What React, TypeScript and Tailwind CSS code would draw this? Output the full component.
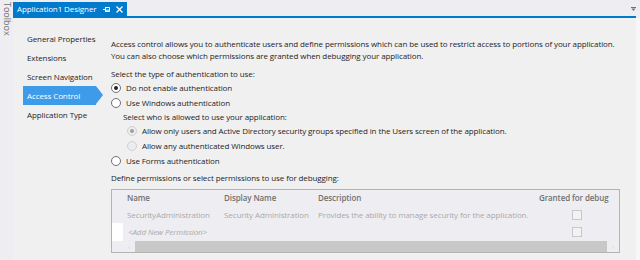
import React from 'react';

const navItems = ['General Properties', 'Extensions', 'Screen Navigation', 'Access Control', 'Application Type'];

function Radio({ checked, disabled }: { checked?: boolean; disabled?: boolean }) {
    return (
        <span
            className={`mr-[5px] flex h-[10px] w-[10px] shrink-0 items-center justify-center rounded-full border ${disabled ? 'border-[#d0d0d0] bg-[#ececec]' : 'border-[#707070] bg-white'}`}
        >
            {checked && <span className={`h-[4px] w-[4px] rounded-full ${disabled ? 'bg-[#a0a0a0]' : 'bg-[#222]'}`} />}
        </span>
    );
}

function Check() {
    return <span className="block h-[10px] w-[10px] border border-[#c8c8c8] bg-[#f2f2f2]" />;
}

export default function App() {
    return (
        <div
            className="flex h-[260px] w-[640px] overflow-hidden whitespace-nowrap bg-[#eeeef2] text-[8px] leading-[12px] tracking-[-0.1px] text-[#1e1e1e]"
            style={{ fontFamily: '"Open Sans", sans-serif' }}
        >
            {/* Toolbox strip */}
            <div className="w-[13px] shrink-0 pt-[2px]">
                <div className="ml-[1px] text-[9px] tracking-normal text-[#717171] [writing-mode:vertical-rl]">Toolbox</div>
            </div>

            <div className="flex min-w-0 flex-1 flex-col">
                {/* Tab row */}
                <div className="flex h-[16px] items-end justify-between pr-[4px]">
                    <div className="flex h-[14px] w-[114px] items-center bg-[#007acc] pl-[4px] text-white">
                        <span>Application1 Designer</span>
                        <svg className="ml-[7px]" width="8" height="7" viewBox="0 0 8 7">
                            <path d="M0 3.5H2.5M2.5 1V6M2.5 1.5H6.5V5.5H2.5M2.5 4.2H6.5" stroke="white" strokeWidth="1" fill="none" />
                        </svg>
                        <svg className="ml-[5px]" width="7" height="7" viewBox="0 0 7 7">
                            <path d="M0.5 0.5L6.5 6.5M6.5 0.5L0.5 6.5" stroke="white" strokeWidth="1.3" />
                        </svg>
                    </div>
                    <svg className="mb-[5px]" width="5" height="4" viewBox="0 0 5 4">
                        <path d="M0 0H5V1H0ZM0.5 1.5H4.5L2.5 4Z" fill="#717171" />
                    </svg>
                </div>
                <div className="mr-[4px] h-[2px] bg-[#007acc]" />

                {/* Designer body */}
                <div className="flex flex-1 border-r-[4px] border-[#f7f7f9] bg-[#f0f0f0]">
                    <div className="flex w-[98px] shrink-0 flex-col pt-[11px]">
                        {navItems.map((item) =>
                            item === 'Access Control' ? (
                                <div key={item} className="relative ml-[10px] flex h-[19px] w-[73px] items-center bg-[#3d9be9] pl-[4px] text-white">
                                    {item}
                                    <span className="absolute right-[-7px] top-0 h-0 w-0 border-y-[9.5px] border-l-[7px] border-y-transparent border-l-[#3d9be9]" />
                                </div>
                            ) : (
                                <div key={item} className="flex h-[19px] items-center pl-[14px] text-[#1e1e1e]">
                                    {item}
                                </div>
                            )
                        )}
                    </div>

                    <div className="flex min-w-0 flex-1 flex-col pt-[20px] pr-[16px]">
                        <p>
                            Access control allows you to authenticate users and define permissions which can be used to restrict access to portions of your application.
                            <br />
                            You can also choose which permissions are granted when debugging your application.
                        </p>
                        <p className="mt-[6px]">Select the type of authentication to use:</p>
                        <label className="flex h-[15px] items-center">
                            <Radio checked />
                            Do not enable authentication
                        </label>
                        <label className="flex h-[15px] items-center">
                            <Radio />
                            Use Windows authentication
                        </label>
                        <div className="pl-[12px]">
                            <p className="mt-[1px]">Select who is allowed to use your application:</p>
                            <label className="flex h-[15px] items-center pl-[4px]">
                                <Radio checked disabled />
                                Allow only users and Active Directory security groups specified in the Users screen of the application.
                            </label>
                            <label className="flex h-[15px] items-center pl-[4px]">
                                <Radio disabled />
                                Allow any authenticated Windows user.
                            </label>
                        </div>
                        <label className="flex h-[15px] items-center">
                            <Radio />
                            Use Forms authentication
                        </label>
                        <p className="mt-[4px]">Define permissions or select permissions to use for debugging:</p>

                        {/* Permissions grid */}
                        <div className="mt-[5px] flex h-[64px] flex-col border border-[#b4b4b4] bg-[#eeeef2]">
                            <div className="flex h-[16px] items-center pl-[15px] font-semibold text-[#717171]">
                                <span className="w-[97px]">Name</span>
                                <span className="w-[94px]">Display Name</span>
                                <span className="flex-1">Description</span>
                                <span className="w-[80px]">Granted for debug</span>
                            </div>
                            <div className="flex h-[17px] items-center pl-[15px] text-[#a9a9a9]">
                                <span className="w-[97px]">SecurityAdministration</span>
                                <span className="w-[94px]">Security Administration</span>
                                <span className="flex-1">Provides the ability to manage security for the application.</span>
                                <span className="flex w-[80px] justify-center pr-[5px]">
                                    <Check />
                                </span>
                            </div>
                            <div className="flex h-[18px] items-center">
                                <span className="h-full w-[11px] bg-white" />
                                <span className="flex-1 pl-[5px] italic text-[#a9a9a9]">&lt;Add New Permission&gt;</span>
                                <span className="flex w-[80px] justify-center pr-[5px]">
                                    <Check />
                                </span>
                            </div>
                            <div className="mt-auto flex h-[11px] items-center">
                                <span className="w-[11px]" />
                                <span className="w-[12px] text-center text-[6px] text-[#c8c8c8]">‹</span>
                                <span className="h-[11px] flex-1 bg-[#c8c8c8]" />
                                <span className="w-[12px] text-center text-[6px] text-[#c8c8c8]">›</span>
                            </div>
                        </div>
                    </div>
                </div>
            </div>
        </div>
    );
}
